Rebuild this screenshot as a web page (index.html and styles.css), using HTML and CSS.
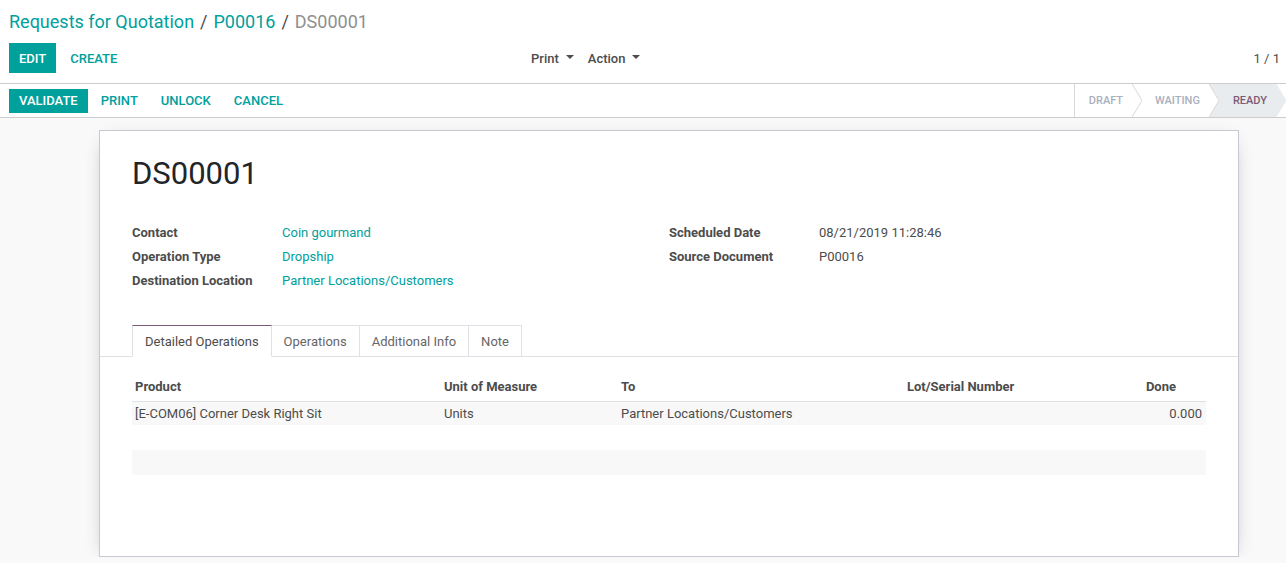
FILE: index.html
```html
<!DOCTYPE html>
<html lang="en">
<head>
    <meta charset="UTF-8">
    <title>DS00001</title>
    <link rel="stylesheet" href="styles.css">
</head>
<body>
    <!-- Control panel -->
    <div class="control-panel">
        <div class="breadcrumb">
            <a href="#">Requests for Quotation</a>
            <span class="sep">/</span>
            <a href="#">P00016</a>
            <span class="sep">/</span>
            <span class="current">DS00001</span>
        </div>
        <div class="cp-row">
            <div class="cp-buttons">
                <button class="btn btn-primary btn-big">Edit</button>
                <button class="btn btn-link btn-big">Create</button>
            </div>
            <div class="cp-sidebar">
                <span class="dropdown">Print <span class="caret"></span></span>
                <span class="dropdown">Action <span class="caret"></span></span>
            </div>
            <div class="pager">1 / 1</div>
        </div>
    </div>

    <div class="form-view">
        <!-- Status bar -->
        <div class="statusbar">
            <div class="status-buttons">
                <button class="btn btn-primary">Validate</button>
                <button class="btn btn-link">Print</button>
                <button class="btn btn-link">Unlock</button>
                <button class="btn btn-link">Cancel</button>
            </div>
            <div class="status-steps">
                <span class="step first">Draft</span>
                <svg class="chevron" width="10" height="33" viewBox="0 0 10 33">
                    <polyline points="0,0 10,16.5 0,33" fill="#fff" stroke="#d8d8d8" stroke-width="1"/>
                </svg>
                <span class="step">Waiting</span>
                <svg class="chevron" width="10" height="33" viewBox="0 0 10 33">
                    <rect x="0" y="0" width="10" height="33" fill="#e9ecef"/>
                    <polyline points="0,0 10,16.5 0,33" fill="#fff" stroke="#d8d8d8" stroke-width="1"/>
                </svg>
                <span class="step active">Ready</span>
                <svg class="chevron" width="10" height="33" viewBox="0 0 10 33">
                    <polyline points="0,0 10,16.5 0,33" fill="#e9ecef" stroke="#e9ecef" stroke-width="1"/>
                </svg>
            </div>
        </div>

        <!-- Sheet -->
        <div class="sheet">
            <h1 class="title">DS00001</h1>

            <div class="groups">
                <table class="group">
                    <tr><td class="label">Contact</td><td><a href="#">Coin gourmand</a></td></tr>
                    <tr><td class="label">Operation Type</td><td><a href="#">Dropship</a></td></tr>
                    <tr><td class="label">Destination Location</td><td><a href="#">Partner Locations/Customers</a></td></tr>
                </table>
                <table class="group">
                    <tr><td class="label">Scheduled Date</td><td>08/21/2019 11:28:46</td></tr>
                    <tr><td class="label">Source Document</td><td>P00016</td></tr>
                </table>
            </div>

            <div class="notebook">
                <div class="tabs">
                    <span class="tab active">Detailed Operations</span>
                    <span class="tab">Operations</span>
                    <span class="tab">Additional Info</span>
                    <span class="tab">Note</span>
                </div>
            </div>

            <table class="list">
                <colgroup>
                    <col style="width: 309px">
                    <col style="width: 177px">
                    <col style="width: 286px">
                    <col style="width: 180px">
                    <col>
                </colgroup>
                <thead>
                    <tr>
                        <th>Product</th>
                        <th>Unit of Measure</th>
                        <th>To</th>
                        <th>Lot/Serial Number</th>
                        <th class="num">Done</th>
                    </tr>
                </thead>
                <tbody>
                    <tr class="odd">
                        <td>[E-COM06] Corner Desk Right Sit</td>
                        <td>Units</td>
                        <td>Partner Locations/Customers</td>
                        <td></td>
                        <td class="num">0.000</td>
                    </tr>
                    <tr><td colspan="5"></td></tr>
                    <tr class="odd"><td colspan="5"></td></tr>
                </tbody>
            </table>
        </div>
    </div>
</body>
</html>
```

FILE: styles.css
```css
* {
    margin: 0;
    padding: 0;
    box-sizing: border-box;
}

body {
    font-family: Roboto, "Noto Sans", sans-serif;
    font-size: 13px;
    color: #4c4c4c;
    background-color: #f9f9f9;
    overflow: hidden;
}

a {
    color: #00a09d;
    text-decoration: none;
}

/* Buttons */
.btn {
    font-family: inherit;
    font-size: 13px;
    font-weight: 500;
    text-transform: uppercase;
    border: none;
    background: none;
    cursor: pointer;
    height: 24px;
    padding: 0 10px;
}

.btn-big {
    height: 30px;
}

.btn-primary {
    background-color: #00a09d;
    color: #fff;
}

.btn-link {
    color: #00a09d;
    margin-left: 3px;
}

/* Control panel */
.control-panel {
    background-color: #fff;
    padding: 9px 6px 10px 9px;
    border-bottom: 1px solid #ccc;
}

.breadcrumb {
    font-size: 18px;
    line-height: 25px;
    height: 25px;
}

.breadcrumb .sep {
    color: #4c4c4c;
    padding: 0 1.5px;
}

.breadcrumb .current {
    color: #8f8f8f;
}

.cp-row {
    margin-top: 9px;
    display: grid;
    grid-template-columns: 522px 1fr auto;
    align-items: center;
    height: 30px;
}

.cp-buttons {
    display: flex;
}

.cp-buttons .btn-link {
    margin-left: 4px;
}

.cp-sidebar {
    display: flex;
    gap: 14px;
    font-weight: 500;
}

.dropdown {
    display: inline-flex;
    align-items: center;
    gap: 7px;
}

.caret {
    width: 0;
    height: 0;
    border-left: 4px solid transparent;
    border-right: 4px solid transparent;
    border-top: 4px solid #4c4c4c;
    margin-top: -3px;
}

.pager {
    color: #4c4c4c;
}

/* Status bar */
.statusbar {
    background-color: #fff;
    border-bottom: 1px solid #ccc;
    height: 34px;
    display: flex;
    justify-content: space-between;
    align-items: center;
    padding-left: 9px;
}

.status-buttons {
    display: flex;
}

.status-buttons .btn-link {
    margin-left: 3px;
}

.status-steps {
    display: flex;
    height: 33px;
    align-self: flex-start;
    border-left: 1px solid #d8d8d8;
}

.step {
    display: flex;
    align-items: center;
    font-size: 11px;
    font-weight: 500;
    text-transform: uppercase;
    color: #a9b0bd;
    padding: 0 9px 0 13px;
}

.step.first {
    padding-left: 14px;
}

.step.active {
    background-color: #e9ecef;
    color: #7c5a75;
    padding-left: 14px;
}

.chevron {
    display: block;
    flex-shrink: 0;
}

/* Sheet */
.sheet {
    background-color: #fff;
    width: 1140px;
    margin: 12px 0 0 99px;
    border: 1px solid #c8c8d3;
    padding: 24px 32px 81px;
    box-shadow: 0 5px 20px -10px rgba(0, 0, 0, 0.45);
}

.title {
    font-size: 31px;
    font-weight: 400;
    line-height: 37px;
    color: #212529;
}

.groups {
    display: flex;
    margin-top: 28px;
}

.group {
    width: 50%;
    border-collapse: collapse;
    align-self: flex-start;
}

.group td {
    height: 24px;
    padding: 0;
    vertical-align: middle;
}

.group td.label {
    width: 150px;
    font-weight: 700;
    color: #4c4c4c;
}

/* Notebook */
.notebook {
    margin: 33px -32px 0;
    padding: 0 32px;
    border-bottom: 1px solid #dee2e6;
}

.tabs {
    display: flex;
    margin-bottom: -1px;
}

.tab {
    height: 32px;
    line-height: 31px;
    padding: 0 12px;
    color: #666;
    border: 1px solid #dee2e6;
    border-left: none;
}

.tab:first-child {
    border-left: 1px solid #dee2e6;
}

.tab.active {
    color: #4c4c4c;
    border-top-color: #7c5a75;
    border-bottom-color: #fff;
    background-color: #fff;
}

/* List */
.list {
    width: 100%;
    table-layout: fixed;
    border-collapse: collapse;
    margin-top: 18px;
}

.list th {
    text-align: left;
    font-weight: 700;
    height: 26px;
    padding: 0 3px 2px;
    border-bottom: 1px solid #dee2e6;
}

.list td {
    height: 25px;
    padding: 0 3px;
}

.list tbody tr:first-child td {
    height: 24px;
}

.list .num {
    text-align: right;
}

.list th.num {
    padding-right: 30px;
}

.list td.num {
    padding-right: 4px;
}

.list tr.odd td {
    background-color: #f8f8f8;
}
```
